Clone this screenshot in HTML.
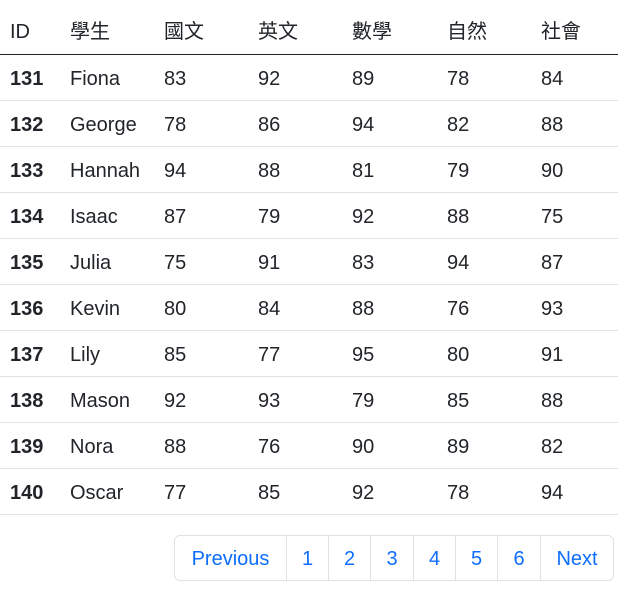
<!DOCTYPE html>
<html><head><meta charset="utf-8"><style>
body{margin:0;width:618px;height:590px;background:#fff;font-family:"Segoe UI","Liberation Sans","Noto Sans CJK TC",sans-serif;font-size:20px;color:#212529;position:relative;overflow:hidden}
.r{position:absolute;left:0;width:618px;height:46px;border-bottom:1px solid #dee2e6;box-sizing:border-box}
.r span{position:absolute;top:1px;line-height:46px}
.h{height:55px;border-bottom:1px solid #212529}
.h span{line-height:62px;font-weight:normal}
.b{font-weight:700}
.pg{position:absolute;top:535px;left:174px;height:46px;display:flex;border:1px solid #dee2e6;border-radius:6px;box-sizing:border-box}
.pg div{color:#0d6efd;line-height:46px;text-align:center;border-left:1px solid #dee2e6;box-sizing:border-box}
.pg div:first-child{border-left:none}
</style></head><body>
<div class="r h" style="top:0"><span style="left:10px">ID</span><span style="left:70px">學生</span><span style="left:164px">國文</span><span style="left:258px">英文</span><span style="left:352px">數學</span><span style="left:447px">自然</span><span style="left:541px">社會</span></div>
<div id="rows"></div>
<script>
var d=[[131,"Fiona",83,92,89,78,84],[132,"George",78,86,94,82,88],[133,"Hannah",94,88,81,79,90],[134,"Isaac",87,79,92,88,75],[135,"Julia",75,91,83,94,87],[136,"Kevin",80,84,88,76,93],[137,"Lily",85,77,95,80,91],[138,"Mason",92,93,79,85,88],[139,"Nora",88,76,90,89,82],[140,"Oscar",77,85,92,78,94]];
var x=[10,70,164,258,352,447,541],h="";
d.forEach(function(r,i){h+='<div class="r" style="top:'+(55+i*46)+'px">';r.forEach(function(v,j){h+='<span'+(j==0?' class="b"':'')+' style="left:'+x[j]+'px">'+v+'</span>'});h+='</div>'});
document.getElementById("rows").innerHTML=h;
</script>
<div class="pg"><div style="width:111px">Previous</div><div style="width:42px">1</div><div style="width:42px">2</div><div style="width:43px">3</div><div style="width:42px">4</div><div style="width:42px">5</div><div style="width:43px">6</div><div style="width:73px">Next</div></div>
</body></html>
